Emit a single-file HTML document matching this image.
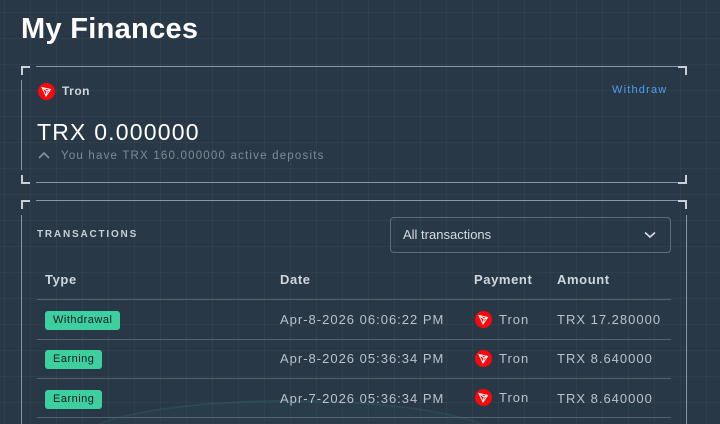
<!DOCTYPE html>
<html style="width:720px;height:424px;overflow:hidden"><head><style>
*{margin:0;padding:0;box-sizing:border-box}
body{width:720px;height:424px;overflow:hidden;background:#293847;font-family:"Liberation Sans",sans-serif;color:#e8edf2}
#w{position:relative;width:720px;height:424px;overflow:hidden;
background-image:linear-gradient(rgba(255,255,255,0.035) 1px,transparent 1px),linear-gradient(90deg,rgba(255,255,255,0.035) 1px,transparent 1px);background-size:26px 26px;background-position:4px 12px}
.a{position:absolute;white-space:nowrap}
.line{position:absolute;background:#8a96a3}
.br{position:absolute;width:9px;height:9px;border-color:#c9d0d6;border-style:solid;border-width:0}
.tron{position:absolute;width:17px;height:17px;border-radius:50%;background:#ff060a}
.tron svg{position:absolute;left:3px;top:3px}
.badge{position:absolute;background:#3ecf9f;color:#0f1a20;font-size:11px;border-radius:3px;height:19px;line-height:19px;padding:0 8px;letter-spacing:.5px}
.hd{font-size:13px;font-weight:bold;color:#cfd6dc;letter-spacing:.6px}
.cell{font-size:13px;color:#b9c2cb;letter-spacing:1px}
.row{position:absolute;left:37px;width:634px;height:1px;background:#56636f}
</style></head><body><div id="w">
<div style="position:absolute;left:80px;top:400px;width:420px;height:80px;border-radius:50%;border:2px solid rgba(60,150,150,0.15);background:rgba(40,90,100,0.12)"></div>
<div class="a" style="left:21px;top:13px;font-size:29px;font-weight:bold;color:#fff;letter-spacing:.3px">My Finances</div>

<div class="line" style="left:36px;top:66px;width:644px;height:1px"></div>
<div class="line" style="left:36px;top:182px;width:644px;height:1px"></div>
<div class="line" style="left:21px;top:80px;width:1px;height:90px"></div>
<div class="br" style="left:21px;top:66px;border-top-width:2px;border-left-width:2px"></div>
<div class="br" style="left:21px;top:175px;border-bottom-width:2px;border-left-width:2px"></div>
<div class="br" style="left:678px;top:66px;border-top-width:2px;border-right-width:2px"></div>
<div class="br" style="left:678px;top:175px;border-bottom-width:2px;border-right-width:2px"></div>

<div class="tron" style="left:38px;top:83px"><svg width="11" height="11" viewBox="0 0 11 11"><path d="M1 1.5L9.5 3.5L5 10Z M9.5 3.5L6 5L1 1.5 M6 5L5 10" fill="none" stroke="#fff" stroke-width="1"/></svg></div>
<div class="a" style="left:62px;top:84px;font-size:12px;font-weight:bold;color:#d0d6dc;letter-spacing:.5px">Tron</div>
<div class="a" style="left:612px;top:84px;font-size:11px;color:#4c9ef0;letter-spacing:1.2px">Withdraw</div>
<div class="a" style="left:37px;top:119px;font-size:23px;color:#fff;letter-spacing:1.2px">TRX 0.000000</div>
<svg class="a" style="left:38px;top:151px" width="12" height="8"><path d="M1 7L6 2L11 7" fill="none" stroke="#8391a0" stroke-width="1.6"/></svg>
<div class="a" style="left:61px;top:150px;font-size:11.5px;color:#7e8b98;letter-spacing:1.2px">You have TRX 160.000000 active deposits</div>

<div class="line" style="left:36px;top:200px;width:644px;height:1px"></div>
<div class="line" style="left:21px;top:215px;width:1px;height:210px"></div>
<div class="line" style="left:686px;top:215px;width:1px;height:210px"></div>
<div class="br" style="left:21px;top:200px;border-top-width:2px;border-left-width:2px"></div>
<div class="br" style="left:678px;top:200px;border-top-width:2px;border-right-width:2px"></div>

<div class="a" style="left:37px;top:229px;font-size:10px;font-weight:bold;color:#c8d0d7;letter-spacing:1.8px">TRANSACTIONS</div>
<div class="a" style="left:390px;top:217px;width:281px;height:36px;border:1px solid #5e6b78;border-radius:4px"></div>
<div class="a" style="left:403px;top:227px;font-size:13px;color:#d5dbe0">All transactions</div>
<svg class="a" style="left:644px;top:231px" width="12" height="8"><path d="M1 1.5L6 6L11 1.5" fill="none" stroke="#d5dbe0" stroke-width="1.6"/></svg>

<div class="a hd" style="left:45px;top:272px">Type</div>
<div class="a hd" style="left:280px;top:272px">Date</div>
<div class="a hd" style="left:474px;top:272px">Payment</div>
<div class="a hd" style="left:557px;top:272px">Amount</div>
<div class="row" style="top:299px"></div>
<div class="row" style="top:339px"></div>
<div class="row" style="top:378px"></div>
<div class="row" style="top:417px"></div>

<div class="badge" style="left:45px;top:311px">Withdrawal</div>
<div class="badge" style="left:45px;top:350px">Earning</div>
<div class="badge" style="left:45px;top:390px">Earning</div>

<div class="a cell" style="left:280px;top:312px">Apr-8-2026 06:06:22 PM</div>
<div class="a cell" style="left:280px;top:351px">Apr-8-2026 05:36:34 PM</div>
<div class="a cell" style="left:280px;top:391px">Apr-7-2026 05:36:34 PM</div>

<div class="tron" style="left:475px;top:311px"><svg width="11" height="11" viewBox="0 0 11 11"><path d="M1 1.5L9.5 3.5L5 10Z M9.5 3.5L6 5L1 1.5 M6 5L5 10" fill="none" stroke="#fff" stroke-width="1"/></svg></div>
<div class="tron" style="left:475px;top:350px"><svg width="11" height="11" viewBox="0 0 11 11"><path d="M1 1.5L9.5 3.5L5 10Z M9.5 3.5L6 5L1 1.5 M6 5L5 10" fill="none" stroke="#fff" stroke-width="1"/></svg></div>
<div class="tron" style="left:475px;top:389px"><svg width="11" height="11" viewBox="0 0 11 11"><path d="M1 1.5L9.5 3.5L5 10Z M9.5 3.5L6 5L1 1.5 M6 5L5 10" fill="none" stroke="#fff" stroke-width="1"/></svg></div>
<div class="a cell" style="left:499px;top:312px">Tron</div>
<div class="a cell" style="left:499px;top:351px">Tron</div>
<div class="a cell" style="left:499px;top:390px">Tron</div>

<div class="a cell" style="left:557px;top:312px">TRX 17.280000</div>
<div class="a cell" style="left:557px;top:351px">TRX 8.640000</div>
<div class="a cell" style="left:557px;top:391px">TRX 8.640000</div>
</div></body></html>
